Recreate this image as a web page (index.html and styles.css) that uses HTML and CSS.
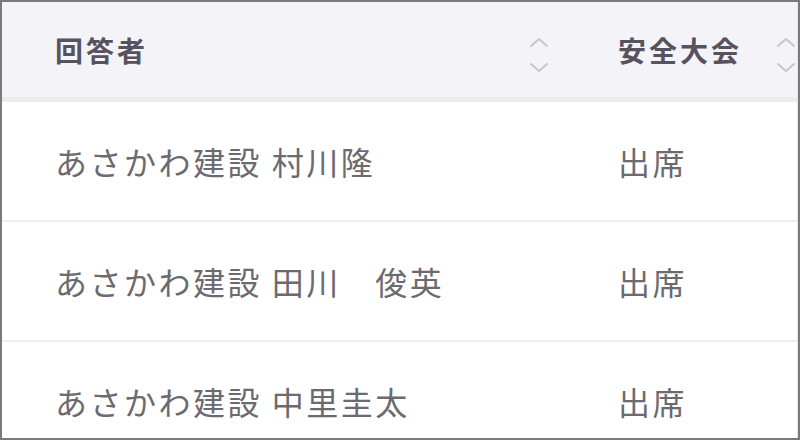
FILE: index.html
```html
<!DOCTYPE html>
<html lang="ja">
<head>
<meta charset="utf-8">
<link rel="stylesheet" href="styles.css">
</head>
<body>
<div class="frame">
  <div class="scroller">
    <table class="grid">
      <colgroup>
        <col class="col-name">
        <col class="col-status">
      </colgroup>
      <thead>
        <tr>
          <th>
            <div class="head-cell">
              <span class="head-label">回答者</span>
              <svg class="sort" viewBox="0 0 18 36" width="18" height="36" aria-hidden="true">
                <path d="M1 9 L9 2 L17 9" />
                <path d="M1 27 L9 34 L17 27" />
              </svg>
            </div>
          </th>
          <th>
            <div class="head-cell">
              <span class="head-label">安全大会</span>
              <svg class="sort" viewBox="0 0 18 36" width="18" height="36" aria-hidden="true">
                <path d="M1 9 L9 2 L17 9" />
                <path d="M1 27 L9 34 L17 27" />
              </svg>
            </div>
          </th>
        </tr>
      </thead>
      <tbody>
        <tr>
          <td>あさかわ建設 村川隆</td>
          <td>出席</td>
        </tr>
        <tr>
          <td>あさかわ建設 田川　俊英</td>
          <td>出席</td>
        </tr>
        <tr>
          <td>あさかわ建設 中里圭太</td>
          <td>出席</td>
        </tr>
      </tbody>
    </table>
  </div>
</div>
</body>
</html>
```

FILE: styles.css
```css
html, body {
  margin: 0;
  padding: 0;
  background: #ffffff;
}

.frame {
  width: 800px;
  height: 440px;
  box-sizing: border-box;
  border: 2px solid #7a7a7c;
  overflow: hidden;
  background: #ffffff;
}

.scroller {
  height: 100%;
  overflow: hidden;
  border-right: 1px solid #e6e6ea;
}

.grid {
  border-collapse: collapse;
  table-layout: fixed;
  width: 810px;
  font-family: "Noto Sans CJK JP", "Noto Sans", sans-serif;
}

.col-name { width: 563px; }
.col-status { width: 247px; }

.grid th {
  height: 95px;
  padding: 0 17px 0 53px;
  background: #f4f4f8;
  border-bottom: 5px solid #eaeaef;
  text-align: left;
  vertical-align: middle;
}

.head-cell {
  display: flex;
  align-items: center;
  justify-content: space-between;
}

.head-label {
  font-size: 28px;
  font-weight: 700;
  color: #57525e;
  letter-spacing: 3px;
}

.sort {
  fill: none;
  stroke: #c6c6cb;
  stroke-width: 2;
  stroke-linecap: round;
  stroke-linejoin: round;
  margin-top: 10px;
}

.grid td {
  height: 118px;
  padding: 0 17px 0 53px;
  border-bottom: 2px solid #efeff1;
  font-size: 32px;
  font-weight: 400;
  letter-spacing: 2.5px;
  color: #6b6a70;
  vertical-align: middle;
  white-space: nowrap;
}
```
